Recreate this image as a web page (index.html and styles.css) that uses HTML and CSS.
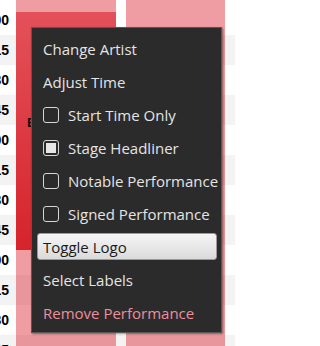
FILE: index.html
```html
<!DOCTYPE html>
<html lang="en">
<head>
<meta charset="utf-8">
<title>Schedule</title>
<link rel="stylesheet" href="styles.css">
</head>
<body>
<div class="board">
  <div class="stripes">
    <div class="slot"><span class="time">8:00</span></div>
    <div class="slot"><span class="time">8:15</span></div>
    <div class="slot"><span class="time">8:30</span></div>
    <div class="slot"><span class="time">8:45</span></div>
    <div class="slot"><span class="time">9:00</span></div>
    <div class="slot"><span class="time">9:15</span></div>
    <div class="slot"><span class="time">9:30</span></div>
    <div class="slot"><span class="time">9:45</span></div>
    <div class="slot"><span class="time">10:00</span></div>
    <div class="slot"><span class="time">10:15</span></div>
    <div class="slot"><span class="time">10:30</span></div>
    <div class="slot"><span class="time">10:45</span></div>
  </div>
  <div class="lanes">
    <div class="lane lane-a">
      <div class="event"><span class="event-title">Electric Pines</span></div>
    </div>
    <div class="lane lane-b"></div>
  </div>
</div>

<div class="menu">
  <div class="item">Change Artist</div>
  <div class="item">Adjust Time</div>
  <div class="item"><span class="box"></span>Start Time Only</div>
  <div class="item"><span class="box checked"></span>Stage Headliner</div>
  <div class="item"><span class="box"></span>Notable Performance</div>
  <div class="item"><span class="box"></span>Signed Performance</div>
  <div class="item active">Toggle Logo</div>
  <div class="item">Select Labels</div>
  <div class="item danger">Remove Performance</div>
</div>
</body>
</html>
```

FILE: styles.css
```css
html, body {
  margin: 0;
  padding: 0;
  background: #ffffff;
}
body {
  width: 235px;
  height: 346px;
  overflow: hidden;
  position: relative;
  font-family: "Open Sans", "Noto Sans", sans-serif;
}
.board {
  display: grid;
  height: 346px;
  overflow: hidden;
}
.stripes, .lanes {
  grid-area: 1 / 1;
}
.stripes {
  display: flex;
  flex-direction: column;
  padding-top: 5px;
}
.slot {
  flex: 0 0 30px;
  display: flex;
  align-items: center;
  background: #ffffff;
}
.slot:nth-child(even) {
  background: #f3f3f3;
}
.time {
  display: block;
  flex: 0 0 9px;
  width: 9px;
  min-width: 0;
  direction: rtl;
  text-align: right;
  white-space: nowrap;
  font-family: "Liberation Sans", Arial, sans-serif;
  font-weight: bold;
  font-size: 14px;
  line-height: 16px;
  color: #000;
}
.lanes {
  display: flex;
  gap: 10px;
  padding-left: 16px;
  z-index: 1;
}
.lane {
  background: rgba(220, 38, 48, 0.45);
}
.lane-a {
  width: 100px;
  padding-top: 12px;
}
.lane-b {
  width: 99px;
}
.event {
  height: 238px;
  background: linear-gradient(#e4515a, #d6232c);
  display: flex;
  flex-direction: column;
  justify-content: center;
  padding-left: 11px;
}
.event-title {
  margin-bottom: 18px;
  font-family: "Liberation Sans", Arial, sans-serif;
  font-weight: bold;
  font-size: 13px;
  color: #111;
  white-space: nowrap;
}
.menu {
  position: absolute;
  left: 31px;
  top: 27px;
  width: 191px;
  box-sizing: border-box;
  padding: 4px 4px 3px 5px;
  display: flex;
  flex-direction: column;
  background: #2b2b2b;
  border: 1px solid #575757;
  box-shadow: 1px 1px 2px rgba(0, 0, 0, 0.45);
  z-index: 5;
}
.item {
  flex: 0 0 27px;
  height: 27px;
  box-sizing: border-box;
  margin: 3px 0;
  padding: 0 5px;
  border: 1px solid transparent;
  border-radius: 3px;
  display: flex;
  align-items: center;
  gap: 9px;
  font-size: 15px;
  color: #e4e4e4;
  white-space: nowrap;
}
.box {
  flex: 0 0 16px;
  width: 16px;
  height: 16px;
  box-sizing: border-box;
  border: 1px solid #d6d6d6;
  border-radius: 3px;
}
.box.checked {
  padding: 2px;
  background: #e6e6e6;
  background-clip: content-box;
}
.item.active {
  background: linear-gradient(#f6f6f6, #dadada);
  border-color: #9a9a9a;
  color: #1a1a1a;
}
.item.danger {
  color: #ee8e9b;
}
```
